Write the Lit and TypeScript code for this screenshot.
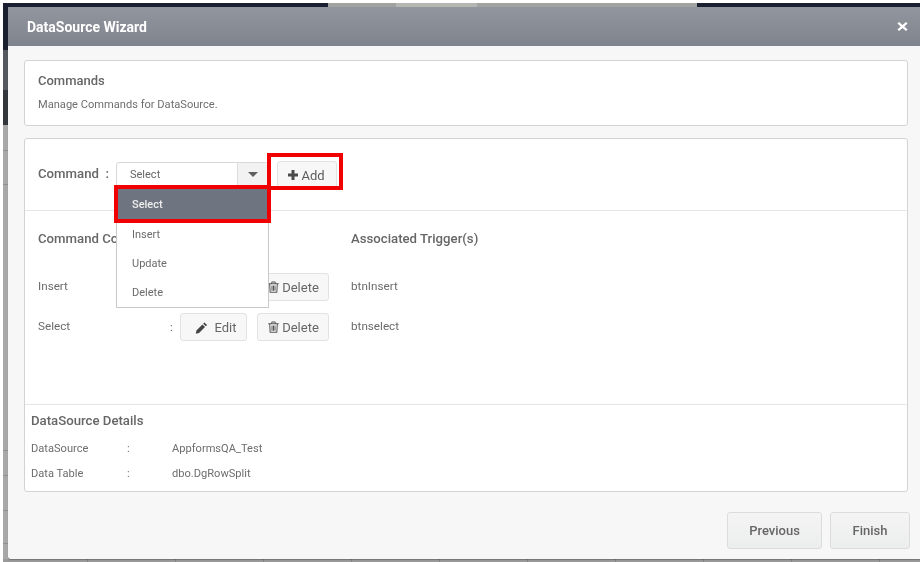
import { LitElement, html, css, svg } from "lit";
import { customElement } from "lit/decorators.js";

const trash = svg`<g fill="none" stroke="#555" stroke-width="1.1"><path d="M1.3 3.4h11.4M4.8 3.2l.7-1.7h3l.7 1.7M2.9 3.6l.5 9h7.2l.5-9M5.4 5.4v5.6M7 5.4v5.6M8.6 5.4v5.6"/></g>`;
const pencil = svg`<path d="M9.8 1.5l2.7 2.7-1.3 1.3-2.7-2.7zM7.7 3.6l2.7 2.7-6.2 6.2-3.4.7.7-3.4z" fill="#444"/>`;
const plus = svg`<path d="M4.5 1h3v3.5H11v3H7.5V11h-3V7.5H1v-3h3.5z" fill="#4a4a4a"/>`;

@customElement("app-root")
export class AppRoot extends LitElement {
  static styles = css`
    :host {
      display: block;
      position: relative;
      width: 920px;
      height: 562px;
      overflow: hidden;
      font-family: Roboto, "Liberation Sans", sans-serif;
      color: #6b6b6b;
      font-size: 11px;
      box-sizing: border-box;
      padding: 7px 0 3px 8px;
      filter: blur(0.3px);
      background:
        linear-gradient(#fff 0 3px, transparent 3px),
        linear-gradient(90deg, #fff 0 3px, transparent 3px),
        linear-gradient(90deg, transparent 328px, #a2a2a0 328px 396px, #b6b6b3 396px 477px, #a2a2a0 477px 697px, transparent 697px) 0 0 / 100% 7px no-repeat,
        repeating-linear-gradient(90deg, transparent 0 87px, #858585 87px 88px) 0 100% / 100% 3px no-repeat,
        linear-gradient(transparent 150px, #8f8f8f 150px 151px, transparent 151px 184px, #8f8f8f 184px 185px, transparent 185px 450px, #8f8f8f 450px 451px, transparent 451px 475px, #8f8f8f 475px 476px, transparent 476px 510px, #8f8f8f 510px 511px, transparent 511px 543px, #8f8f8f 543px 544px, transparent 544px),
        linear-gradient(#1b2030 0 50px, #55585f 50px 90px, #33373b 90px 125px, #a8a8a8 125px 559px, #9a9a9a 559px);
    }
    .modal {
      height: 552px;
      background: #f7f7f7;
      display: flex;
      flex-direction: column;
      border-radius: 3px 0 0 3px;
      position: relative;
      box-shadow: 0 1px 1px rgba(0, 0, 0, 0.25);
    }
    .header {
      height: 39px;
      flex: none;
      display: flex;
      align-items: center;
      justify-content: space-between;
      padding: 0 12px 0 19px;
      background: linear-gradient(#92969e, #7f838d);
      color: #fff;
      font-size: 14px;
      font-weight: 700;
    }
    .header svg { display: block; }
    .body {
      flex: 1;
      padding: 14px 12px 0 16px;
      display: flex;
      flex-direction: column;
      gap: 12px;
    }
    .card {
      background: #fff;
      border: 1px solid #d3d3d3;
      border-radius: 3px;
      box-sizing: border-box;
    }
    .intro {
      height: 66px;
      padding: 12px 13px;
    }
    .intro h2 {
      margin: 0;
      font-size: 13px;
      line-height: 15px;
      font-weight: 500;
      color: #666;
    }
    .intro p {
      margin: 10px 0 0;
      font-size: 11.1px;
      line-height: 14px;
      color: #6f6f6f;
    }
    .main {
      height: 354px;
      display: flex;
      flex-direction: column;
    }
    .cmdbar {
      height: 72px;
      flex: none;
      box-sizing: border-box;
      border-bottom: 1px solid #e6e6e6;
      display: flex;
      align-items: flex-start;
      padding: 23px 0 0 13px;
    }
    .cmdlabel {
      width: 78px;
      display: flex;
      justify-content: space-between;
      padding-right: 7px;
      box-sizing: border-box;
      font-size: 13.2px;
      font-weight: 500;
      line-height: 24px;
      color: #666;
    }
    .select {
      width: 152px;
      height: 25px;
      box-sizing: border-box;
      border: 1px solid #d8d8d8;
      border-radius: 3px 3px 0 0;
      display: flex;
      line-height: 23px;
      color: #666;
    }
    .select span { flex: 1; padding-left: 13px; }
    .arrow {
      width: 30px;
      padding-left: 1px;
      box-sizing: border-box;
      background: #f2f2f2;
      border-left: 1px solid #ddd;
      display: flex;
      align-items: center;
      justify-content: center;
    }
    .arrow i {
      width: 0;
      height: 0;
      border: 5.5px solid transparent;
      border-top: 5.5px solid #5f5f5f;
      border-bottom: 0;
    }
    .btn {
      box-sizing: border-box;
      background: #f7f7f7;
      border: 1px solid #e2e2e2;
      border-radius: 3px;
      display: flex;
      align-items: center;
      justify-content: center;
      color: #666;
      font-size: 13px;
    }
    .add {
      width: 60px;
      height: 28px;
      margin: -1px 0 0 9px;
      gap: 2px;
      padding-right: 2px;
      color: #5c5c5c;
    }
    .grid {
      padding: 20px 13px 0;
      display: grid;
      grid-template-columns: 132px 181px auto;
      flex: 1;
      align-content: start;
    }
    .grid h3 {
      margin: 0;
      font-size: 13.2px;
      font-weight: 500;
      line-height: 16px;
      color: #666;
      white-space: nowrap;
    }
    .grid h3.span { grid-column: span 2; }
    .cell {
      height: 40px;
      display: flex;
      align-items: center;
      font-size: 11.7px;
    }
    .cell.first { margin-top: 20px; }
    .cell.pull { padding-bottom: 2px; box-sizing: border-box; }
    .colon { width: 7px; margin-right: 3px; }
    .edit { width: 67px; height: 28px; gap: 6px; padding-left: 5px; margin-right: 10px; }
    .del { width: 72px; height: 28px; gap: 2px; }
    .details {
      height: 87px;
      flex: none;
      box-sizing: border-box;
      border-top: 1px solid #e6e6e6;
      padding: 8px 6px 0;
    }
    .details h3 {
      margin: 0 0 13px;
      font-size: 13.2px;
      font-weight: 500;
      line-height: 16px;
      color: #666;
    }
    .drow {
      display: grid;
      grid-template-columns: 96px 45px auto;
      height: 25px;
      line-height: 14px;
      font-size: 11.1px;
      color: #6d6d6d;
    }
    .footer {
      flex: none;
      display: flex;
      justify-content: flex-end;
      gap: 8px;
      padding: 0 10px 10px 0;
    }
    .footer .btn {
      height: 37px;
      background: linear-gradient(#f4f4f4, #eceded);
      border-color: #dcdcdc;
      font-weight: 500;
      font-size: 13px;
      color: #666;
    }
    .prev { width: 95px; }
    .finish { width: 80px; }
    .menu {
      position: absolute;
      left: 108px;
      top: 179px;
      width: 153px;
      height: 122px;
      box-sizing: border-box;
      background: #fff;
      border: 1px solid #c9c9c9;
      border-top: 0;
      padding-top: 3px;
    }
    .menu div {
      height: 29px;
      line-height: 29px;
      padding-left: 15px;
      color: #6b6b6b;
      font-size: 11px;
    }
    .menu .on {
      height: 31px;
      line-height: 31px;
      background: #6f7580;
      color: #eee;
      font-weight: 500;
    }
    .red {
      position: absolute;
      box-sizing: border-box;
      border: 4px solid #f00000;
    }
    .r1 { left: 259px; top: 146px; width: 76px; height: 37px; }
    .r2 { left: 106px; top: 178px; width: 157px; height: 38px; }
  `;

  private row(label: string, trigger: string, first = false) {
    const f = first ? "first" : "";
    return html`
      <div class="cell pull ${f}">${label}</div>
      <div class="cell ${f}">
        <span class="colon">:</span>
        <div class="btn edit"><svg width="13" height="13" viewBox="0 0 13.5 13.5">${pencil}</svg>Edit</div>
        <div class="btn del"><svg width="13" height="14" viewBox="0 0 14 14">${trash}</svg>Delete</div>
      </div>
      <div class="cell pull ${f}">${trigger}</div>
    `;
  }

  render() {
    return html`
      <div class="modal">
        <div class="header">
          <span>DataSource Wizard</span>
          <svg width="11" height="11" viewBox="0 0 12 12"><path d="M2.2 1L6 4.4 9.8 1 11.5 2.7 8 6l3.5 3.3-1.7 1.7L6 7.6 2.2 11 .5 9.3 4 6 .5 2.7z" fill="#fff"/></svg>
        </div>
        <div class="body">
          <div class="card intro">
            <h2>Commands</h2>
            <p>Manage Commands for DataSource.</p>
          </div>
          <div class="card main">
            <div class="cmdbar">
              <div class="cmdlabel"><span>Command</span><span>:</span></div>
              <div class="select"><span>Select</span><div class="arrow"><i></i></div></div>
              <div class="btn add"><svg width="12" height="12" viewBox="0 0 12 12">${plus}</svg>Add</div>
            </div>
            <div class="grid">
              <h3 class="span">Command Co</h3>
              <h3>Associated Trigger(s)</h3>
              ${this.row("Insert", "btnInsert", true)}
              ${this.row("Select", "btnselect")}
            </div>
            <div class="details">
              <h3>DataSource Details</h3>
              <div class="drow"><span>DataSource</span><span>:</span><span>AppformsQA_Test</span></div>
              <div class="drow"><span>Data Table</span><span>:</span><span>dbo.DgRowSplit</span></div>
            </div>
          </div>
        </div>
        <div class="footer">
          <div class="btn prev">Previous</div>
          <div class="btn finish">Finish</div>
        </div>
        <div class="menu">
          <div class="on">Select</div>
          <div>Insert</div>
          <div>Update</div>
          <div>Delete</div>
        </div>
        <div class="red r1"></div>
        <div class="red r2"></div>
      </div>
    `;
  }
}
